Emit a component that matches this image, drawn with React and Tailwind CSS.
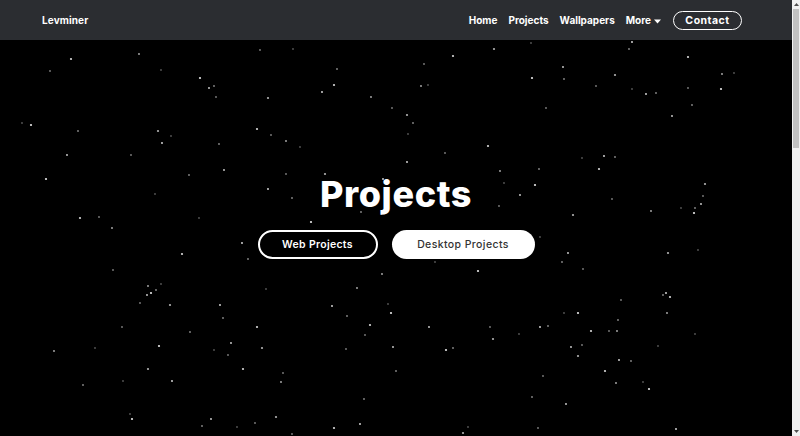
import React from "react";

const STARS = [
  [71,59],[50,71],[139,54],[161,70],[200,78],[214,86],[209,88],[216,97],[268,98],[293,49],[322,92],[337,69],[334,85],[392,108],[371,97],
  [22,123],[31,125],[78,131],[67,155],[131,155],[158,131],[171,136],[162,143],[219,144],[257,129],[271,135],[286,141],[300,147],
  [46,179],[189,175],[224,170],[286,174],[325,174],[155,194],[268,189],[292,198],[80,218],[99,217],[112,228],[199,218],[311,222],
  [361,212],[383,179],[260,50],
  [494,49],[531,43],[632,42],[629,49],[453,56],[424,64],[421,86],[428,85],[532,78],[564,79],[563,67],[596,86],[615,75],[632,89],
  [646,94],[656,93],[688,57],[688,88],[722,74],[734,73],[721,89],[692,105],[672,116],[546,108],[407,115],[408,134],[407,162],
  [413,123],[488,146],[445,153],[500,171],[504,183],[535,185],[539,169],[520,195],[499,206],[573,215],[582,158],[604,156],
  [615,157],[599,169],[612,199],[651,211],[681,208],[694,213],[695,208],[701,204],[703,196],[705,184],[540,237],
  [242,243],[248,259],[182,254],[113,270],[148,286],[161,284],[151,293],[156,290],[147,295],[140,303],[170,305],[266,289],
  [220,305],[223,318],[257,327],[122,327],[54,351],[95,348],[159,346],[190,332],[231,343],[228,355],[262,348],[214,350],
  [332,306],[347,316],[370,325],[365,335],[382,274],[388,304],[391,313],[396,371],[393,347],[346,349],[148,369],[123,381],
  [172,381],[83,385],[243,369],[283,373],[281,382],[130,414],[132,419],[202,426],[211,419],[255,423],[276,417],[237,427],
  [360,424],[364,399],[334,428],[292,434],[357,288],
  [435,262],[478,271],[562,262],[568,253],[583,269],[668,253],[698,250],[666,293],[663,295],[670,297],[621,300],[667,313],
  [564,313],[578,313],[618,320],[429,327],[490,327],[493,339],[519,334],[540,327],[548,326],[591,331],[609,331],[617,331],
  [695,334],[446,350],[453,348],[571,347],[582,345],[578,356],[658,346],[619,360],[631,361],[605,371],[543,376],[616,383],
  [643,382],[649,389],[532,397],[566,404],[538,428],[463,433],[468,427],[676,429]
];

function Stars() {
  return (
    <svg
      className="absolute inset-0 h-full w-full"
      viewBox="0 40 792 396"
      preserveAspectRatio="none"
    >
      {STARS.map(([x, y], i) => {
        const op = [0.85, 0.5, 0.7, 0.35, 0.9, 0.55][i % 6];
        const r = i % 4 === 0 ? 1.1 : 0.9;
        return <circle key={i} cx={x} cy={y} r={r} fill="#ffffff" opacity={op} />;
      })}
    </svg>
  );
}

function Caret() {
  return (
    <svg width="7" height="5" viewBox="0 0 7 5" className="ml-[3px] mt-[1px]">
      <path d="M0 0.5 H7 L3.5 4.5 Z" fill="#ffffff" />
    </svg>
  );
}

export default function App() {
  return (
    <div
      className="flex h-[436px] w-[800px] overflow-hidden bg-black"
      style={{ fontFamily: "Inter, 'Noto Sans', sans-serif" }}
    >
      <div className="flex h-full w-[792px] flex-col">
        <nav className="flex h-[40px] shrink-0 items-center justify-between bg-[#2b2d31] pl-[42px] pr-[50px]">
          <span className="mt-[1px] text-[10px] font-bold tracking-[0.1px] text-white">Levminer</span>
          <div className="mt-[1px] flex items-center text-[10px] font-bold text-white">
            <span>Home</span>
            <span className="ml-[11px]">Projects</span>
            <span className="ml-[11px]">Wallpapers</span>
            <span className="ml-[11px] flex items-center">
              More
              <Caret />
            </span>
            <span className="ml-[12px] flex h-[19px] w-[69px] items-center justify-center rounded-full border-[1.5px] border-white text-[10.5px] tracking-[0.5px]">
              Contact
            </span>
          </div>
        </nav>
        <section className="relative flex flex-1 flex-col items-center bg-black">
          <Stars />
          <h1 className="relative mt-[132px] text-[36px] font-extrabold leading-[44px] tracking-[0.6px] text-white">
            Projects
          </h1>
          <div className="relative mt-[14px] flex gap-[14px]">
            <span className="flex h-[29px] w-[120px] items-center justify-center rounded-full border-2 border-white text-[10.5px] font-semibold tracking-[0.3px] text-white">
              Web Projects
            </span>
            <span className="flex h-[29px] w-[143px] items-center justify-center rounded-full bg-white text-[10.5px] font-medium tracking-[0.4px] text-[#333333]">
              Desktop Projects
            </span>
          </div>
        </section>
      </div>
      <div className="flex h-full w-[8px] flex-col bg-[#f1f1f1]">
        <div className="flex h-[9px] items-center justify-center">
          <svg width="5" height="3" viewBox="0 0 5 3"><path d="M0 3 L2.5 0 L5 3 Z" fill="#505050" /></svg>
        </div>
        <div className="mx-[1px] h-[139px] bg-[#c1c1c1]" />
        <div className="flex-1" />
        <div className="flex h-[9px] items-center justify-center">
          <svg width="5" height="3" viewBox="0 0 5 3"><path d="M0 0 L2.5 3 L5 0 Z" fill="#505050" /></svg>
        </div>
      </div>
    </div>
  );
}
